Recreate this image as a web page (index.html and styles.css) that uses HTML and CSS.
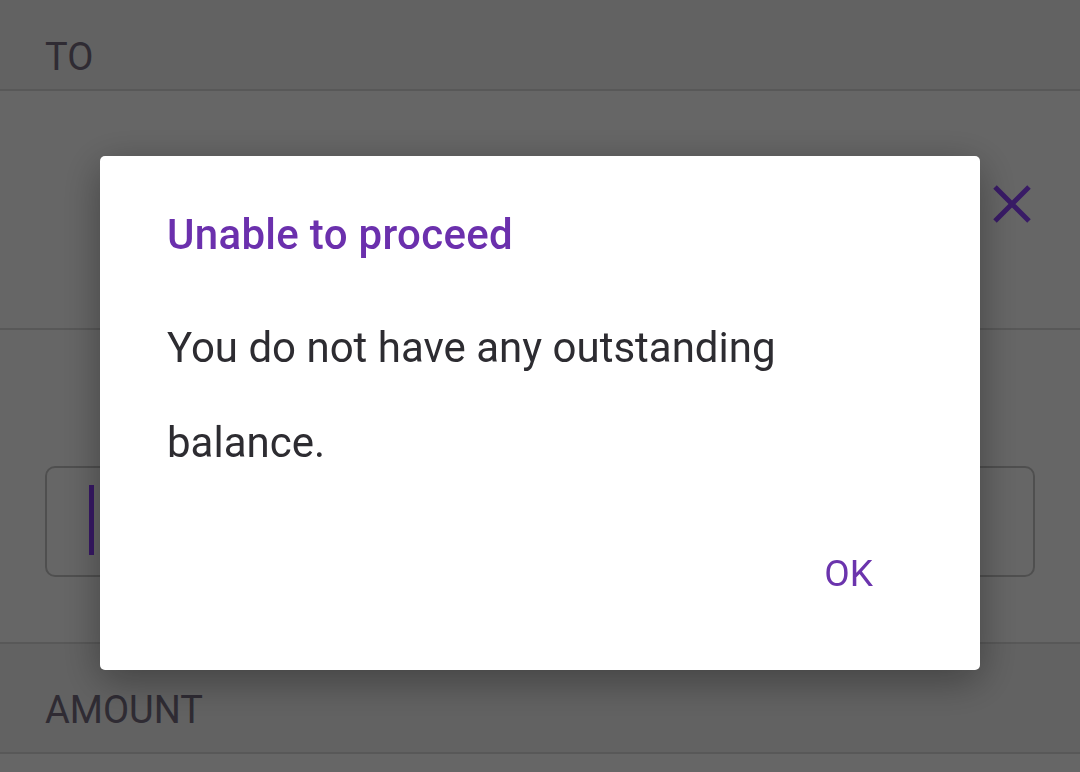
FILE: index.html
```html
<!DOCTYPE html>
<html lang="en">
<head>
    <meta charset="UTF-8">
    <meta name="viewport" content="width=device-width, initial-scale=1.0">
    <title>Pay - Unable to proceed</title>
    <link rel="stylesheet" href="styles.css">
</head>
<body>

    <div class="form">
        <div class="section-label label-to">TO</div>
        <div class="recipient">
            <svg class="close-icon" width="40" height="40" viewBox="0 0 40 40">
                <path d="M3 3 L37 37 M37 3 L3 37" stroke="currentColor" stroke-width="5" fill="none"/>
            </svg>
        </div>
        <div class="field-area">
            <div class="text-field"><span class="caret"></span></div>
        </div>
        <div class="section-label label-amount">AMOUNT</div>
    </div>

    <div class="scrim"></div>

    <div class="dialog">
        <h2 class="dialog-title">Unable to proceed</h2>
        <p class="dialog-message">You do not have any outstanding balance.</p>
        <div class="dialog-actions">
            <button class="dialog-button">OK</button>
        </div>
    </div>

</body>
</html>
```

FILE: styles.css
```css
body {
    margin: 0;
    font-family: Roboto, "Liberation Sans", sans-serif;
    background: #ffffff;
    overflow: hidden;
}
.form {
    width: 1080px;
}
.section-label {
    background: #f4f4f4;
    color: #756d80;
    font-size: 38px;
    padding-left: 45px;
    box-sizing: border-box;
    border-bottom: 2px solid #dcdcdc;
}
.label-to {
    height: 91px;
    padding-top: 35px;
}
.label-amount {
    height: 110px;
    padding-top: 44px;
}
.recipient {
    height: 239px;
    border-bottom: 2px solid #dcdcdc;
    display: flex;
    justify-content: flex-end;
    align-items: flex-start;
    padding: 93px 48px 0 0;
    box-sizing: border-box;
}
.close-icon {
    color: #8e44ff;
}
.field-area {
    height: 314px;
    border-bottom: 2px solid #dcdcdc;
    padding: 136px 45px 0 45px;
    box-sizing: border-box;
}
.text-field {
    height: 111px;
    border: 2px solid #c6c6c6;
    border-radius: 10px;
    box-sizing: border-box;
    padding: 17px 0 0 42px;
}
.caret {
    display: block;
    width: 5px;
    height: 70px;
    background: #8a3cff;
}
.scrim {
    position: fixed;
    inset: 0;
    background: rgba(0, 0, 0, 0.6);
}
.dialog {
    position: fixed;
    left: 100px;
    top: 156px;
    width: 880px;
    height: 514px;
    background: #ffffff;
    border-radius: 5px;
    box-shadow: 0px 10px 40px rgba(0, 0, 0, 0.35);
    padding: 0 67px;
    box-sizing: border-box;
}
.dialog-title {
    margin: 0;
    padding-top: 55px;
    font-size: 42px;
    font-weight: 500;
    color: #6b30ad;
    line-height: 48px;
    letter-spacing: 0.3px;
}
.dialog-message {
    margin: 41px 0 0 0;
    font-size: 42px;
    line-height: 95px;
    color: #2d2c31;
    max-width: 680px;
}
.dialog-actions {
    display: flex;
    justify-content: flex-end;
    margin-top: 62px;
}
.dialog-button {
    border: none;
    background: none;
    font-family: Roboto, "Liberation Sans", sans-serif;
    font-size: 37px;
    font-weight: 400;
    color: #6b34ad;
    padding: 0 40px 0 0;
}
```
